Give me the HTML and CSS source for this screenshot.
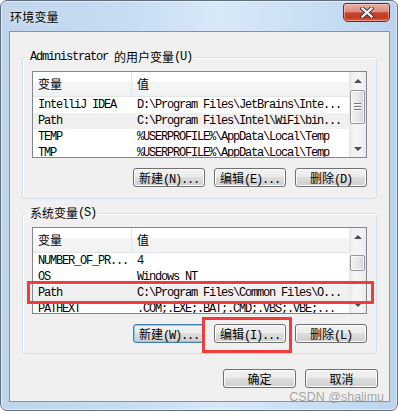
FILE: index.html
```html
<!DOCTYPE html>
<html>
<head>
  <meta charset="utf-8">
  <link rel="stylesheet" href="styles.css">
</head>
<body>
<div class="window">
  <div class="titlebar">
    <span class="title">环境变量</span>
    <div class="close-btn">
      <svg width="14" height="11" viewBox="0 0 14 11">
        <path d="M2.5 1.5 L11.5 9.5 M11.5 1.5 L2.5 9.5" stroke="#3b3b3b" stroke-width="4.2" stroke-linecap="square" fill="none"/>
        <path d="M2.5 1.5 L11.5 9.5 M11.5 1.5 L2.5 9.5" stroke="#fff" stroke-width="2.2" stroke-linecap="square" fill="none"/>
      </svg>
    </div>
  </div>

  <div class="client">
    <fieldset class="group group-user">
      <legend>Administrator <span class="zh">的用户变量</span>(U)</legend>
      <div class="list">
        <div class="list-body">
          <div class="list-head">
            <div class="col-name"><span class="zh">变量</span></div>
            <div class="col-value"><span class="zh">值</span></div>
          </div>
          <div class="row"><div class="col-name">IntelliJ IDEA</div><div class="col-value">D:\Program Files\JetBrains\Inte...</div></div>
          <div class="row selected"><div class="col-name">Path</div><div class="col-value">C:\Program Files\Intel\WiFi\bin...</div></div>
          <div class="row"><div class="col-name">TEMP</div><div class="col-value">%USERPROFILE%\AppData\Local\Temp</div></div>
          <div class="row"><div class="col-name">TMP</div><div class="col-value">%USERPROFILE%\AppData\Local\Temp</div></div>
        </div>
        <div class="scrollbar">
          <div class="sb-btn"><span class="arrow-up"></span></div>
          <div class="sb-track"><div class="sb-thumb thumb-user"><span class="grip"></span></div></div>
          <div class="sb-btn"><span class="arrow-down"></span></div>
        </div>
      </div>
      <div class="buttons">
        <button class="btn"><span class="zh">新建</span>(N)...</button>
        <button class="btn"><span class="zh">编辑</span>(E)...</button>
        <button class="btn"><span class="zh">删除</span>(D)</button>
      </div>
    </fieldset>

    <fieldset class="group group-sys">
      <legend><span class="zh">系统变量</span>(S)</legend>
      <div class="list">
        <div class="list-body">
          <div class="list-head">
            <div class="col-name"><span class="zh">变量</span></div>
            <div class="col-value"><span class="zh">值</span></div>
          </div>
          <div class="row"><div class="col-name">NUMBER_OF_PR...</div><div class="col-value">4</div></div>
          <div class="row"><div class="col-name">OS</div><div class="col-value">Windows NT</div></div>
          <div class="row selected"><div class="col-name">Path</div><div class="col-value">C:\Program Files\Common Files\O...</div></div>
          <div class="row"><div class="col-name">PATHEXT</div><div class="col-value">.COM;.EXE;.BAT;.CMD;.VBS;.VBE;...</div></div>
        </div>
        <div class="scrollbar">
          <div class="sb-btn"><span class="arrow-up"></span></div>
          <div class="sb-track"><div class="sb-thumb thumb-sys"></div></div>
          <div class="sb-btn"><span class="arrow-down"></span></div>
        </div>
      </div>
      <div class="buttons">
        <button class="btn default"><span class="zh">新建</span>(W)...</button>
        <button class="btn"><span class="zh">编辑</span>(I)...</button>
        <button class="btn"><span class="zh">删除</span>(L)</button>
      </div>
    </fieldset>

    <div class="dialog-buttons">
      <button class="btn wide"><span class="zh">确定</span></button>
      <button class="btn wide"><span class="zh">取消</span></button>
    </div>
  </div>

  <!-- red annotation boxes -->
  <div class="mark mark-path"></div>
  <div class="mark mark-edit"></div>
  <div class="watermark">CSDN @shalimu</div>
</div>
</body>
</html>
```

FILE: styles.css
```css
* {
  box-sizing: border-box;
}

body {
  margin: 0;
  background: #fff;
}

.window {
  position: relative;
  width: 398px;
  height: 411px;
  display: flex;
  flex-direction: column;
  padding: 0 7px 8px 8px;
  border: 1px solid #5f6d7e;
  border-radius: 7px;
  background: linear-gradient(90deg, #bfd5ec 0%, #c6dcf3 30%, #d7e8f8 55%, #c9def3 80%, #bcd3ec 100%);
  box-shadow: inset 0 0 0 1px rgba(255, 255, 255, 0.55);
  font-family: "Liberation Mono", "Noto Sans CJK SC", monospace;
  font-size: 12px;
  letter-spacing: -1.2px;
  color: #000;
}

.zh {
  font-family: "Noto Sans CJK SC", sans-serif;
  letter-spacing: 0;
}

/* title bar */
.titlebar {
  height: 30px;
  display: flex;
  justify-content: space-between;
  align-items: flex-start;
}

.title {
  margin: 9px 0 0 1px;
  font-family: "Noto Sans CJK SC", sans-serif;
  font-size: 12px;
  line-height: 14px;
  letter-spacing: 0.2px;
  text-shadow: 0 0 6px rgba(255, 255, 255, 0.95);
}

.close-btn {
  width: 47px;
  height: 19px;
  margin-top: 2px;
  display: flex;
  align-items: center;
  justify-content: center;
  border: 1px solid #6e2b22;
  border-radius: 3px 3px 5px 5px;
  background: linear-gradient(to bottom, #eab0a3 0%, #dc8d7c 45%, #c54530 52%, #c03a25 80%, #d8643f 100%);
  box-shadow: inset 0 0 0 1px rgba(255, 210, 200, 0.5);
}

/* client area */
.client {
  flex: 1;
  display: flex;
  flex-direction: column;
  border: 1px solid #8094ad;
  background: #f0f0f0;
}

.group {
  margin: 18px 12px 0;
  padding: 7px 9px 11px;
  min-width: 0;
  border: 1px solid #d5dfe5;
  border-radius: 3px;
  box-shadow: inset 1px 1px 0 #fff;
}

.group-sys {
  margin-top: 7px;
  padding-bottom: 10px;
}

.group legend {
  height: 14px;
  margin-left: -4px;
  padding: 0 2px;
  line-height: 14px;
  white-space: nowrap;
}

.group legend .zh {
  vertical-align: top;
}

/* list view */
.list {
  display: flex;
  height: 87px;
  border: 1px solid #828790;
  background: #fff;
}

.list-body {
  flex: 1;
  min-width: 0;
  overflow: hidden;
}

.list-head,
.row {
  display: grid;
  grid-template-columns: 99px 1fr;
  white-space: nowrap;
}

.list-head {
  height: 25px;
  line-height: 24px;
  border-bottom: 1px solid #e5e5e5;
  background: linear-gradient(to bottom, #fff 0%, #fff 40%, #f4f5f7 40%, #f1f2f4 100%);
}

.list-head .col-name {
  border-right: 1px solid #e3e5e8;
}

.col-name {
  padding-left: 5px;
  overflow: hidden;
}

.col-value {
  padding-left: 5px;
  overflow: hidden;
}

.row {
  height: 16px;
  line-height: 16px;
}

.row.selected {
  background: #f0f0f0;
}

/* scrollbar */
.scrollbar {
  width: 17px;
  display: flex;
  flex-direction: column;
  background: linear-gradient(to right, #e6e6e6, #f3f3f3 25%, #f3f3f3 75%, #e9e9e9);
}

.sb-btn {
  height: 17px;
  display: flex;
  align-items: center;
  justify-content: center;
}

.sb-track {
  flex: 1;
}

.arrow-up {
  border-left: 4px solid transparent;
  border-right: 4px solid transparent;
  border-bottom: 4px solid #4d4d4d;
}

.arrow-down {
  border-left: 4px solid transparent;
  border-right: 4px solid transparent;
  border-top: 4px solid #4d4d4d;
}

.sb-thumb {
  margin: 0 1px;
  display: flex;
  align-items: center;
  justify-content: center;
  border: 1px solid #979797;
  border-radius: 2px;
  background: linear-gradient(to right, #f2f2f2, #e8e8e8 50%, #d6d6d6);
  box-shadow: inset 0 0 0 1px rgba(255, 255, 255, 0.7);
}

.thumb-user {
  margin-top: 1px;
  height: 34px;
}

.thumb-sys {
  margin-top: 10px;
  height: 16px;
}

.grip {
  width: 7px;
  height: 8px;
  background: repeating-linear-gradient(to bottom, #767676 0 1px, #fbfbfb 1px 2px, transparent 2px 3px);
}

/* buttons */
.buttons {
  margin-top: 10px;
  display: flex;
  justify-content: flex-end;
  gap: 9px;
}

.btn {
  width: 72px;
  height: 19px;
  padding: 0;
  border: 1px solid #707070;
  border-radius: 3px;
  background: linear-gradient(to bottom, #f2f2f2 0%, #ebebeb 45%, #dddddd 50%, #cfcfcf 100%);
  box-shadow: inset 0 0 0 1px #fcfcfc;
  font: inherit;
  letter-spacing: inherit;
  line-height: 17px;
  color: #000;
  text-align: center;
  white-space: nowrap;
}

.btn.default {
  border-color: #3c7fb1;
  box-shadow: inset 0 0 0 1px #7fd0f6;
}

.btn.wide {
  width: 73px;
}

.dialog-buttons {
  margin: 15px 11px 0 0;
  display: flex;
  justify-content: flex-end;
  gap: 9px;
}

/* annotations */
.mark {
  position: absolute;
  border: 3px solid #f23b3b;
}

.mark-path {
  left: 26px;
  top: 280px;
  width: 347px;
  height: 23px;
}

.mark-edit {
  left: 201px;
  top: 316px;
  width: 90px;
  height: 36px;
}

.watermark {
  position: absolute;
  right: 13px;
  top: 388px;
  font-family: "Liberation Sans", Arial, sans-serif;
  font-size: 12.5px;
  line-height: 16px;
  letter-spacing: 0;
  color: rgba(140, 140, 140, 0.75);
}
```
